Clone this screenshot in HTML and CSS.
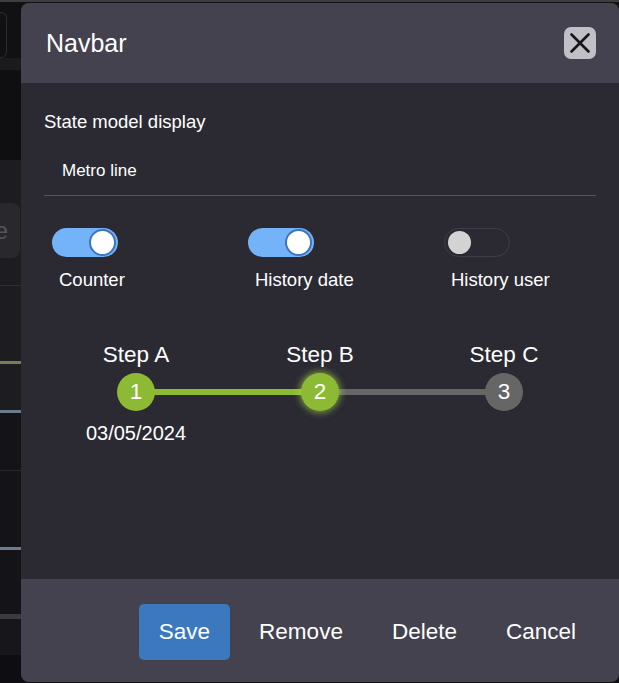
FILE: index.html
```html
<!DOCTYPE html>
<html lang="en">
<head>
<meta charset="utf-8">
<title>Navbar</title>
<link rel="stylesheet" href="styles.css">
</head>
<body>
<div class="page">
  <div class="bg bg-topline"></div>
  <div class="bg bg-a"><div class="bg-input"></div></div>
  <div class="bg bg-b"></div>
  <div class="bg bg-c"></div>
  <div class="bg bg-d"><div class="bg-chip">e</div></div>
  <div class="bg bg-rule"></div>
  <div class="bg bg-e"></div>
  <div class="bg bg-olive"></div>
  <div class="bg bg-f"></div>
  <div class="bg bg-steel"></div>
  <div class="bg bg-g"></div>
  <div class="bg bg-rule2"></div>
  <div class="bg bg-h"></div>
  <div class="bg bg-steel"></div>
  <div class="bg bg-i"></div>
  <div class="bg bg-grey"></div>
  <div class="bg bg-j"></div>
  <div class="bg bg-k"></div>
</div>

<div class="dialog" role="dialog" aria-label="Navbar">
  <header class="dialog-header">
    <h2 class="dialog-title">Navbar</h2>
    <button class="close-btn" aria-label="Close">
      <svg width="32" height="32" viewBox="0 0 32 32"><path d="M7.5 7.5 L24.5 24.5 M24.5 7.5 L7.5 24.5" stroke="#161616" stroke-width="2.6" stroke-linecap="round" fill="none"/></svg>
    </button>
  </header>

  <section class="dialog-body">
    <div class="field-label">State model display</div>
    <div class="select-field">Metro line</div>

    <div class="toggles">
      <div class="toggle-item">
        <div class="toggle on"><span class="knob"></span></div>
        <div class="toggle-label">Counter</div>
      </div>
      <div class="toggle-item">
        <div class="toggle on"><span class="knob"></span></div>
        <div class="toggle-label">History date</div>
      </div>
      <div class="toggle-item">
        <div class="toggle off"><span class="knob"></span></div>
        <div class="toggle-label">History user</div>
      </div>
    </div>

    <div class="steps">
      <div class="step done">
        <div class="step-label">Step A</div>
        <div class="step-dot">1</div>
        <div class="step-date">03/05/2024</div>
      </div>
      <div class="step active">
        <div class="step-label">Step B</div>
        <div class="step-dot">2</div>
      </div>
      <div class="step todo">
        <div class="step-label">Step C</div>
        <div class="step-dot">3</div>
      </div>
    </div>
  </section>

  <footer class="dialog-footer">
    <button class="btn btn-primary">Save</button>
    <button class="btn">Remove</button>
    <button class="btn">Delete</button>
    <button class="btn">Cancel</button>
  </footer>
</div>
</body>
</html>
```

FILE: styles.css
```css
* { box-sizing: border-box; }

html, body {
  margin: 0;
  padding: 0;
  width: 619px;
  height: 683px;
  overflow: hidden;
  background: #0e0e12;
  font-family: "Liberation Sans", Arial, sans-serif;
  color: #ffffff;
}

/* ---------- background page (mostly covered) ---------- */
.page {
  display: flex;
  flex-direction: column;
  width: 619px;
  height: 683px;
}
.bg { flex: none; position: relative; overflow: hidden; }
.bg-topline { height: 2px; background: #3d3d42; }
.bg-a { height: 56px; background: #111114; padding-top: 10px; }
.bg-input {
  margin-left: -20px;
  width: 27px;
  height: 46px;
  border: 1px solid #2c2c31;
  border-radius: 6px;
}
.bg-b { height: 12px; background: #1b1a1f; }
.bg-c { height: 90px; background: #0f0f12; }
.bg-d { height: 125px; background: #1d1c21; padding-top: 43px; }
.bg-chip {
  margin-left: -30px;
  width: 50px;
  height: 55px;
  border-radius: 8px;
  background: #29282d;
  color: #55545a;
  font-size: 24px;
  line-height: 55px;
  text-align: right;
  padding-right: 12px;
}
.bg-rule { height: 1px; background: #2f2e33; }
.bg-e { height: 75px; background: #1d1c21; }
.bg-olive { height: 3px; background: #7b7c52; }
.bg-f { height: 46px; background: #1d1c21; }
.bg-steel { height: 3px; background: #6b7c8c; }
.bg-g { height: 57px; background: #141418; }
.bg-rule2 { height: 1px; background: #28272c; }
.bg-h { height: 76px; background: #141418; }
.bg-i { height: 64px; background: #141418; }
.bg-grey { height: 5px; background: #3b3b3d; }
.bg-j { height: 36px; background: #17161b; }
.bg-k { flex: 1; background: #0e0e12; }

/* ---------- dialog ---------- */
.dialog {
  position: absolute;
  left: 21px;
  top: 3px;
  width: 598px;
  height: 679px;
  border-radius: 8px;
  overflow: hidden;
  display: flex;
  flex-direction: column;
  background: #2b2a33;
}

.dialog-header {
  flex: none;
  height: 80px;
  background: #44424f;
  display: flex;
  align-items: center;
  justify-content: space-between;
  padding: 0 23px 0 25px;
}
.dialog-title {
  margin: 0;
  font-size: 25px;
  line-height: 29px;
  font-weight: normal;
  color: #ffffff;
}
.close-btn {
  width: 32px;
  height: 32px;
  padding: 0;
  border: none;
  border-radius: 7px;
  background: #c1c0c7;
  display: flex;
  align-items: center;
  justify-content: center;
}
.close-btn svg { display: block; }

.dialog-body {
  flex: 1;
  padding: 28px 23px 0 23px;
}

.field-label {
  font-size: 18.5px;
  line-height: 21px;
  color: #ffffff;
}

.select-field {
  margin-top: 29px;
  padding: 0 0 14px 18px;
  font-size: 17px;
  line-height: 20px;
  border-bottom: 1px solid #55535f;
}

.toggles {
  margin-top: 32px;
  display: grid;
  grid-template-columns: repeat(3, 196px);
}
.toggle-item { display: flex; flex-direction: column; }
.toggle {
  margin-left: 8px;
  width: 66px;
  height: 29px;
  border-radius: 15px;
  display: flex;
  align-items: center;
}
.toggle.on {
  background: #74b3f8;
  justify-content: flex-end;
  padding-right: 2px;
}
.toggle.on .knob {
  width: 27px;
  height: 27px;
  border-radius: 50%;
  background: #ffffff;
  border: 2px solid #3b74bf;
}
.toggle.off {
  border: 1px solid #3f3d49;
  padding-left: 3px;
}
.toggle.off .knob {
  width: 23px;
  height: 23px;
  border-radius: 50%;
  background: #d3d3d3;
}
.toggle-label {
  margin-top: 12px;
  margin-left: 15px;
  font-size: 18.5px;
  line-height: 22px;
}

.steps {
  margin-top: 51px;
  display: grid;
  grid-template-columns: repeat(3, 1fr);
}
.step {
  position: relative;
  display: flex;
  flex-direction: column;
  align-items: center;
}
.step:not(:last-child)::after {
  content: "";
  position: absolute;
  top: 47px;
  left: 50%;
  width: 100%;
  height: 6px;
  background: #666666;
  z-index: 0;
}
.step.done::after { background: #8dba35; }
.step-label {
  font-size: 22.5px;
  line-height: 26px;
}
.step-dot {
  position: relative;
  z-index: 1;
  margin-top: 5px;
  width: 38px;
  height: 38px;
  border-radius: 50%;
  display: flex;
  align-items: center;
  justify-content: center;
  font-size: 22.5px;
  line-height: 1;
  background: #666666;
  color: #ffffff;
}
.step.done .step-dot,
.step.active .step-dot { background: #8dba35; }
.step.active .step-dot {
  box-shadow: 0 0 6px 2px rgba(176, 226, 70, 0.55);
}
.step-date {
  margin-top: 11px;
  font-size: 20px;
  line-height: 23px;
}

.dialog-footer {
  flex: none;
  height: 103px;
  background: #44424f;
  display: flex;
  justify-content: flex-end;
  align-items: flex-start;
  gap: 9px;
  padding: 25px 23px 0 0;
}
.btn {
  height: 56px;
  padding: 0 20px;
  border: none;
  border-radius: 5px;
  background: transparent;
  color: #ffffff;
  font-family: "Liberation Sans", Arial, sans-serif;
  font-size: 22.5px;
  line-height: 26px;
}
.btn-primary { background: #3b78bd; }
```
